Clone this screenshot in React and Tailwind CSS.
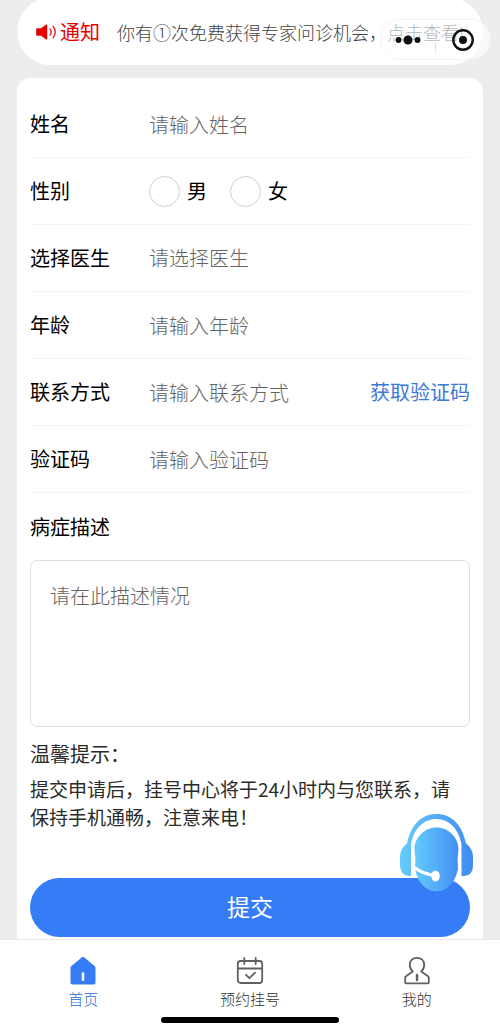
import React from "react";

function Row({ label, htmlFor, children }) {
  return (
    <div className="flex h-[67px] items-center border-b border-[#f5f5f5]">
      <label htmlFor={htmlFor} className="w-[119px] shrink-0">
        {label}
      </label>
      {children}
    </div>
  );
}

function TextField({ id, type = "text", placeholder }) {
  return (
    <input
      id={id}
      type={type}
      placeholder={placeholder}
      className="h-10 w-full min-w-0 flex-1 bg-transparent font-light outline-none placeholder:text-[#636363]"
    />
  );
}

function Gender({ value, text }) {
  return (
    <label className="flex items-center gap-[7px]">
      <input
        type="radio"
        name="gender"
        value={value}
        className="size-[31px] appearance-none rounded-full border border-[#cfcfcf] bg-white checked:border-8 checked:border-[#367cf7]"
      />
      {text}
    </label>
  );
}

function Notice() {
  return (
    <section className="-mt-0.5 flex h-[67px] items-center overflow-hidden rounded-full bg-white pl-[19px] whitespace-nowrap">
      <svg viewBox="0 0 21 16" className="h-4 w-[21px] shrink-0" fill="none">
        <path d="M1 4.200h4L10.200.4q1-.5 1 .6v14q0 1.100-1 .6L5 11.800H1q-.8 0-.8-.8V5Q.2 4.200 1 4.200Z" fill="#e60000" />
        <path d="M14 4.800q2.400 3.200 0 6.400M17 2.200q4.600 5.800 0 11.600" stroke="#e60000" strokeWidth="1.200" strokeLinecap="round" />
      </svg>
      <strong className="ml-[3px] font-normal text-[#e60000]">通知</strong>
      <p className="ml-[17px] text-[18px] font-light text-[#444444]">你有①次免费获得专家问诊机会，点击查看!</p>
    </section>
  );
}

function Capsule() {
  return (
    <div className="fixed top-[19px] right-[9px] flex h-[41px] w-[111px] items-center rounded-full border border-[#f3f3f3] bg-white/60">
      <button type="button" aria-label="更多" className="flex h-full flex-1 items-center justify-center">
        <svg viewBox="0 0 26 10" className="h-2.5 w-[26px]" fill="#111111">
          <circle cx="3.500" cy="5" r="2.900" />
          <circle cx="13" cy="5" r="4.500" />
          <circle cx="22.500" cy="5" r="2.900" />
        </svg>
      </button>
      <span className="h-[26px] w-px bg-[#e4e4e4]" />
      <button type="button" aria-label="关闭" className="flex h-full flex-1 items-center justify-center">
        <svg viewBox="0 0 22 22" className="size-[22px]">
          <circle cx="11" cy="11" r="9.700" fill="none" stroke="#111111" strokeWidth="2.400" />
          <circle cx="11" cy="11" r="4" fill="#111111" />
        </svg>
      </button>
    </div>
  );
}

function Headset() {
  return (
    <button type="button" aria-label="在线客服" className="fixed right-[27px] bottom-[141px]">
      <svg viewBox="0 0 73 78" className="h-[78px] w-[73px]">
        <defs>
          <linearGradient id="shell" gradientUnits="userSpaceOnUse" x1="0" y1="0" x2="73" y2="0">
            <stop offset="0" stopColor="#66cbfb" />
            <stop offset="1" stopColor="#408cf2" />
          </linearGradient>
          <linearGradient id="face" x1="0" y1="0" x2="1" y2="0">
            <stop offset="0" stopColor="#62cbfc" />
            <stop offset="1" stopColor="#438ff1" />
          </linearGradient>
        </defs>
        <path
          d="M7 29.500C11 10 22 0 36.500 0S62 10 66 29.500q7 5 7 13.500v8q0 11-9 11h-2.500V30C58 14 49 5 36.500 5S14 14 11 30v32H8.500Q0 61 0 51v-8q0-8.500 7-13.500Z"
          fill="url(#shell)"
        />
        <path
          d="M36.500 13.500C24 13.500 14.500 24 14.500 35q1.500 10 .5 20C18 69 26 77.500 36.500 77.500S55 69 58 55q-1-10 .5-20C58.500 24 49 13.500 36.500 13.500Z"
          fill="url(#face)"
        />
        <path d="M14.500 53.500C20 58 26 60 34 61.500" fill="none" stroke="#ffffff" strokeWidth="3.200" />
        <ellipse cx="35.500" cy="62" rx="4.300" ry="5.600" fill="#ffffff" />
      </svg>
    </button>
  );
}

function HomeIcon() {
  return (
    <svg viewBox="0 0 28 30" className="h-[30px] w-7">
      <path d="M13 1.200q1-.8 2 0l10.600 8.700q.9.800.9 2v14.900q0 1.700-1.700 1.700H3.200q-1.700 0-1.700-1.700V11.900q0-1.200.9-2Z" fill="#367cf7" />
      <path d="M14 17.500v6.200" stroke="#ffffff" strokeWidth="2.600" strokeLinecap="round" />
    </svg>
  );
}

function CalendarIcon() {
  return (
    <svg viewBox="0 0 28 30" className="h-[30px] w-7" fill="none" stroke="#606060" strokeWidth="1.800" strokeLinecap="round" strokeLinejoin="round">
      <rect x="1.800" y="5" width="24.400" height="22" rx="2.800" />
      <path d="M2 12.500h24M8.300 2v6M19.700 2v6M10 18.800l3.400 3.300 5.600-5.500" />
    </svg>
  );
}

function UserIcon() {
  return (
    <svg viewBox="0 0 28 30" className="h-[30px] w-7" fill="none" stroke="#606060" strokeWidth="1.800" strokeLinecap="round" strokeLinejoin="round">
      <path d="M9.800 15.500C7.500 13.700 6.800 11.500 6.800 9c0-4.500 3-7.200 7.200-7.200s7.200 2.700 7.200 7.200c0 2.500-.7 4.700-3 6.500l6.800 4.800q.7.500.8 1.400v4.700q0 .9-.9.900H3.100q-.9 0-.9-.9v-4.700q0-.9.800-1.400Z" />
      <path d="M14 19v5" strokeWidth="2.400" />
    </svg>
  );
}

const tabs = [
  { text: "首页", Icon: HomeIcon, color: "text-[#2a6bd4]" },
  { text: "预约挂号", Icon: CalendarIcon, color: "text-[#333333]" },
  { text: "我的", Icon: UserIcon, color: "text-[#333333]" },
];

export default function App() {
  return (
    <div className="flex min-h-screen flex-col bg-[#ededed] font-['Noto_Sans_CJK_SC',sans-serif] text-[20px] leading-7 text-black">
      <main className="flex flex-1 flex-col px-[17px]">
        <Notice />
        <form className="mt-[13px] flex-1 rounded-t-[13px] bg-white px-[13px] pt-[13px] pb-0.5" onSubmit={(e) => e.preventDefault()}>
          <Row label="姓名" htmlFor="name">
            <TextField id="name" placeholder="请输入姓名" />
          </Row>
          <div role="radiogroup" aria-labelledby="gender-label" className="flex h-[67px] items-center border-b border-[#f5f5f5]">
            <span id="gender-label" className="w-[119px] shrink-0">性别</span>
            <div className="flex gap-[23px]">
              <Gender value="male" text="男" />
              <Gender value="female" text="女" />
            </div>
          </div>
          <Row label="选择医生" htmlFor="doctor">
            <select id="doctor" defaultValue="" className="h-10 min-w-0 flex-1 appearance-none bg-transparent font-light text-[#636363] outline-none">
              <option value="">请选择医生</option>
            </select>
          </Row>
          <Row label="年龄" htmlFor="age">
            <TextField id="age" placeholder="请输入年龄" />
          </Row>
          <Row label="联系方式" htmlFor="phone">
            <TextField id="phone" type="tel" placeholder="请输入联系方式" />
            <button type="button" className="shrink-0 text-[#3b78d8]">获取验证码</button>
          </Row>
          <Row label="验证码" htmlFor="code">
            <TextField id="code" placeholder="请输入验证码" />
          </Row>
          <label htmlFor="symptoms" className="flex h-[67px] items-center">病症描述</label>
          <textarea
            id="symptoms"
            placeholder="请在此描述情况"
            className="block h-[167px] w-full resize-none rounded-[7px] border border-[#dddddd] px-[19px] py-[21px] font-light outline-none placeholder:text-[#636363]"
          />
          <h2 className="mt-[13px] text-[#2b2b2b]">温馨提示：</h2>
          <p className="mt-[7px] pr-3 text-[19px] text-[#2b2b2b]">提交申请后，挂号中心将于24小时内与您联系，请保持手机通畅，注意来电！</p>
          <button type="submit" className="mt-[47px] flex h-[59px] w-full items-start justify-center rounded-full bg-[#367cf7] pt-[14px] text-[23px] text-white">
            提交
          </button>
        </form>
      </main>

      <nav className="sticky bottom-0 border-t border-[#e8e8e8] bg-white">
        <div className="flex pt-4">
          {tabs.map(({ text, Icon, color }) => (
            <a key={text} href="#" className={`flex flex-1 flex-col items-center text-[15px] leading-[26px] font-light ${color}`}>
              <Icon />
              {text}
            </a>
          ))}
        </div>
        <div className="mx-auto mt-[5px] mb-[10px] h-1.5 w-[178px] rounded-full bg-black" />
      </nav>

      <Capsule />
      <Headset />
    </div>
  );
}
